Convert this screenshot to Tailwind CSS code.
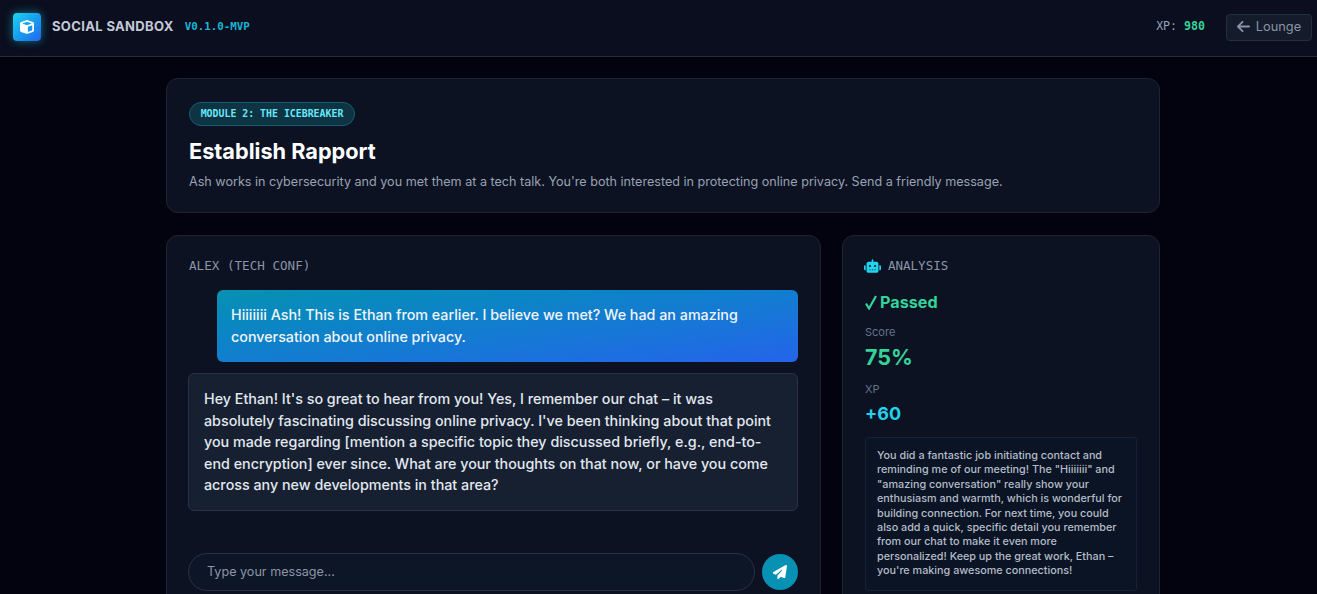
<!DOCTYPE html>
<html lang="en">
<head>
  <meta charset="UTF-8">
  <title>Social Sandbox</title>
  <script src="https://cdn.jsdelivr.net/npm/@tailwindcss/browser@4"></script>
</head>
<body class="h-[594px] overflow-hidden bg-[#02030f] text-white font-['Inter',sans-serif]">
  <!-- Top bar -->
  <header class="h-[57px] flex items-center justify-between pl-[13px] pr-[5px] pb-[2px] bg-[#0a0e1e] border-b border-[#262b38]">
    <div class="flex items-center">
      <div class="w-[28px] h-[28px] rounded-[4px] bg-gradient-to-br from-[#22d3ee] to-[#2563eb] shadow-[0_0_10px_rgba(34,211,238,0.5)] flex items-center justify-center">
        <svg class="w-[14px] h-[14px]" viewBox="0 0 512 512" fill="#fff"><path d="M234.500 5.700c13.900-5 29.100-5 43.100 0l192 68.600C495 83.400 512 107.500 512 134.600V377.400c0 27-17 51.200-42.500 60.300l-192 68.600c-13.900 5-29.100 5-43.100 0l-192-68.600C17 428.600 0 404.500 0 377.400V134.600c0-27 17-51.200 42.500-60.300l192-68.600zM256 66L82.300 128 256 190l173.700-62L256 66zm32 368.600l160-57.100v-188L288 246.600v188z"/></svg>
      </div>
      <span class="ml-[11px] text-[13px] font-bold tracking-[0.35px] text-[#c3cad6]">SOCIAL SANDBOX</span>
      <span class="ml-[11px] mt-[1px] font-['DejaVu_Sans_Mono',monospace] text-[10.800px] text-[#1ab5d4] font-bold">V0.1.0-MVP</span>
    </div>
    <div class="flex items-center">
      <span class="font-['DejaVu_Sans_Mono',monospace] text-[11.600px] text-[#94a3b8]">XP: <span class="font-bold text-[#34d399]">980</span></span>
      <button class="ml-[21px] w-[86px] h-[27px] flex items-center justify-center gap-[6px] rounded-[4px] bg-[#141b2a] border border-[#262d3c] text-[12.800px] text-[#8a94a6]">
        <svg class="w-[13px] h-[15px] -mt-[1px]" viewBox="0 0 448 512" fill="currentColor"><path d="M9.400 233.400c-12.500 12.500-12.500 32.800 0 45.300l160 160c12.500 12.500 32.800 12.500 45.300 0s12.500-32.800 0-45.300L109.300 288 416 288c17.700 0 32-14.300 32-32s-14.300-32-32-32l-306.700 0L214.600 118.600c12.500-12.500 12.500-32.800 0-45.300s-32.800-12.500-45.300 0l-160 160z"/></svg>
        Lounge
      </button>
    </div>
  </header>

  <main class="ml-[166px] w-[994px] pt-[21px]">
    <!-- Mission brief -->
    <section class="h-[135px] rounded-[12px] border border-[#1e2433] bg-[#0c1222] pt-[23px] px-[22px]">
      <span class="flex w-[166px] items-center justify-center h-[24px] rounded-full bg-[#0e3444] border border-[#155e75] font-['DejaVu_Sans_Mono',monospace] font-bold text-[9.900px] text-[#67e8f9]">MODULE 2: THE ICEBREAKER</span>
      <h1 class="mt-[9px] text-[21.700px] leading-[32px] font-bold text-white">Establish Rapport</h1>
      <p class="mt-[5px] text-[12.600px] leading-[20px] text-[#98a2b3]">Ash works in cybersecurity and you met them at a tech talk. You're both interested in protecting online privacy. Send a friendly message.</p>
    </section>

    <div class="mt-[22px] flex gap-[21px]">
      <!-- Chat -->
      <section class="w-[655px] h-[400px] rounded-[12px] border border-[#1e2433] bg-[#0c1222] px-[21px] pt-[22px]">
        <h2 class="ml-px font-['DejaVu_Sans_Mono',monospace] text-[12.600px] leading-[16px] text-[#8b95a7]">ALEX (TECH CONF)</h2>
        <div class="mt-[16px] ml-[29px] w-[581px] h-[72px] rounded-[6px] bg-gradient-to-br from-[#0891b2] to-[#2563eb] px-[14px] py-[14px] text-[14.300px] font-[450] leading-[22px] text-[#f1f5f9]">
          Hiiiiiii Ash! This is Ethan from earlier. I believe we met? We had an amazing conversation about online privacy.
        </div>
        <div class="mt-[11px] w-[610px] h-[138px] rounded-[6px] bg-[#172030] border border-[#2a3242] px-[15px] py-[14px] text-[14.300px] font-[450] leading-[21.600px] text-[#e2e8f0]">
          Hey Ethan! It's so great to hear from you! Yes, I remember our chat – it was absolutely fascinating discussing online privacy. I've been thinking about that point you made regarding [mention a specific topic they discussed briefly, e.g., end-to-end encryption] ever since. What are your thoughts on that now, or have you come across any new developments in that area?
        </div>
        <div class="mt-[42px] flex items-center gap-[7px]">
          <div class="w-[567px] h-[38px] rounded-full bg-[#0d1626] border border-[#2a3242] flex items-center pl-[18px] text-[12.600px] text-[#8b95a7]">Type your message...</div>
          <button class="w-[36px] h-[36px] rounded-full bg-[#0891b2] flex items-center justify-center">
            <svg class="w-[14px] h-[14px] -mt-[1px]" viewBox="0 0 512 512" fill="#fff"><path d="M498.100 5.600c10.100 7 15.400 19.100 13.500 31.200l-64 416c-1.500 9.700-7.400 18.200-16 23s-18.900 5.400-28 1.600L284 427.700l-68.500 74.100c-8.900 9.700-22.900 12.900-35.200 8.100S160 493.200 160 480V396.400c0-4 1.500-7.800 4.200-10.700L331.800 202.800c5.800-6.300 5.600-16-.4-22s-15.700-6.400-22-.7L106 360.800 17.700 316.600C7.100 311.300.3 300.700 0 288.900s5.900-22.800 16.100-28.700l448-256c10.700-6.100 23.900-5.500 34 1.400z"/></svg>
          </button>
        </div>
      </section>

      <!-- Analysis -->
      <aside class="w-[318px] h-[400px] rounded-[12px] border border-[#1e2433] bg-[#0c1222] px-[22px] pt-[22px]">
        <h2 class="flex items-center gap-[7px] font-['DejaVu_Sans_Mono',monospace] text-[12.500px] leading-[16px] text-[#8b95a7]">
          <svg class="-ml-px -mt-[1px] w-[17px] h-[14px]" viewBox="0 0 640 512" fill="#22d3ee"><path d="M320 0c17.700 0 32 14.300 32 32V96H472c39.800 0 72 32.200 72 72V440c0 39.800-32.200 72-72 72H168c-39.800 0-72-32.200-72-72V168c0-39.800 32.200-72 72-72H288V32c0-17.700 14.300-32 32-32zM208 384c-8.800 0-16 7.200-16 16s7.200 16 16 16h32c8.800 0 16-7.200 16-16s-7.200-16-16-16H208zm96 0c-8.800 0-16 7.200-16 16s7.200 16 16 16h32c8.800 0 16-7.200 16-16s-7.200-16-16-16H304zm96 0c-8.800 0-16 7.200-16 16s7.200 16 16 16h32c8.800 0 16-7.200 16-16s-7.200-16-16-16H400zM264 256a40 40 0 1 0 -80 0 40 40 0 1 0 80 0zm152 40a40 40 0 1 0 0-80 40 40 0 1 0 0 80zM48 224H64V416H48c-26.500 0-48-21.500-48-48V272c0-26.500 21.500-48 48-48zm544 0c26.500 0 48 21.500 48 48v96c0 26.500-21.500 48-48 48H576V224h16z"/></svg>
          ANALYSIS
        </h2>
        <div class="mt-[16px] flex items-center gap-[3px] text-[16.200px] leading-[24px] font-bold text-[#34d399]">
          <svg class="w-[12px] h-[15px]" viewBox="0 0 12 15" fill="none" stroke="currentColor" stroke-width="2.200"><path d="M1 8.500 4 13.500 11 1"/></svg>
          Passed
        </div>
        <div class="mt-[10px] text-[11px] leading-[16px] text-[#64748b]">Score</div>
        <div class="mt-[3px] text-[21.500px] leading-[28px] font-bold text-[#34d399]">75%</div>
        <div class="mt-[10px] text-[11px] leading-[16px] text-[#64748b]">XP</div>
        <div class="mt-[4px] text-[18px] leading-[26px] font-bold text-[#22d3ee]">+60</div>
        <div class="mt-[10px] w-[272px] h-[154px] rounded-[3px] bg-[#0b1424] border border-[#182133] px-[11px] py-[11px] text-[10.800px] font-[450] leading-[14.400px] text-[#b4bcc8]">
          You did a fantastic job initiating contact and reminding me of our meeting! The "Hiiiiiii" and "amazing conversation" really show your enthusiasm and warmth, which is wonderful for building connection. For next time, you could also add a quick, specific detail you remember from our chat to make it even more personalized! Keep up the great work, Ethan – you're making awesome connections!
        </div>
      </aside>
    </div>
  </main>
</body>
</html>
